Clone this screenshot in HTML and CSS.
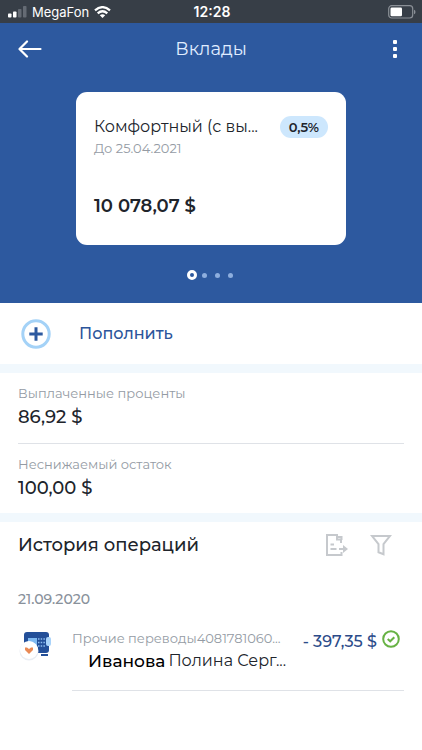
FILE: index.html
```
<!DOCTYPE html>
<html lang="ru">
<head>
<meta charset="utf-8">
<meta name="viewport" content="width=device-width, initial-scale=1">
<title>Вклады</title>
<link rel="stylesheet" href="styles.css">
</head>
<body>
<div class="status">
  <div class="carrier">
    <svg width="19" height="12" viewBox="0 0 19 12" aria-hidden="true"><g fill="#fff"><rect x="0" y="7.500" width="3.500" height="4" rx=".8"/><rect x="5" y="5.500" width="3.500" height="6" rx=".8"/></g><g fill="#656b74"><rect x="10" y="3" width="3.500" height="8.500" rx=".8"/><rect x="15" y="0" width="3.500" height="11.500" rx=".8"/></g></svg>
    <span>MegaFon</span>
    <svg width="17" height="12" viewBox="0 0 17 12" fill="none" stroke="#fff" stroke-width="2.300" aria-hidden="true"><path d="M1 4.300Q8.500-2 16 4.300M3.700 7.300Q8.500 3.200 13.300 7.300"/><path d="M8.500 12L5.800 9.300Q8.500 7.200 11.200 9.300Z" fill="#fff" stroke="none"/></svg>
  </div>
  <time>12:28</time>
  <svg class="battery" width="28" height="14" viewBox="0 0 28 14" aria-hidden="true"><rect x=".7" y=".7" width="24" height="12.300" rx="3" fill="none" stroke="#8b9097" stroke-width="1.200"/><rect x="2.500" y="2.500" width="11.500" height="8.700" rx="1.300" fill="#fff"/><path d="M26 4.800q1.500.5 1.500 2.200T26 9.200z" fill="#8b9097"/></svg>
</div>
<header class="hero">
  <div class="bar">
    <button class="icon-btn" aria-label="Назад"><svg width="24" height="18" viewBox="0 0 24 18" fill="none" stroke="#fff" stroke-width="2.200" stroke-linecap="round" stroke-linejoin="round"><path d="M9 1.500L1.500 9L9 16.500M2 9H22.500"/></svg></button>
    <h1>Вклады</h1>
    <button class="icon-btn" aria-label="Меню"><svg width="12" height="20" viewBox="0 0 12 20" fill="#fff"><rect x="1" y="1" width="4" height="4" rx="1"/><rect x="1" y="8" width="4" height="4" rx="1"/><rect x="1" y="15" width="4" height="4" rx="1"/></svg></button>
  </div>
  <article class="deposit">
    <div class="deposit-top"><h2>Комфортный (с вы...</h2><span class="rate">0,5%</span></div>
    <p class="until">До 25.04.2021</p>
    <p class="balance">10 078,07 $</p>
  </article>
  <div class="dots"><i class="dot current"></i><i class="dot"></i><i class="dot"></i><i class="dot"></i></div>
</header>
<main>
  <button class="topup">
    <svg width="30" height="30" viewBox="0 0 30 30" fill="none" aria-hidden="true"><circle cx="15" cy="15" r="13.200" stroke="#a4d2f7" stroke-width="3"/><path d="M15 8.300V21.700M8.300 15H21.700" stroke="#2c599f" stroke-width="3"/></svg>
    <span>Пополнить</span>
  </button>
  <dl class="facts">
    <div class="fact"><dt>Выплаченные проценты</dt><dd>86,92 $</dd></div>
    <div class="fact"><dt>Неснижаемый остаток</dt><dd>100,00 $</dd></div>
  </dl>
  <section class="history">
    <div class="history-head">
      <h2>История операций</h2>
      <button class="icon-btn" aria-label="Выписка"><svg width="24" height="24" viewBox="0 0 24 24" fill="none" stroke="#c6c9cd" stroke-width="2"><path d="M17 10V6.500H13V2H3V22H17.500V19M13 2V4H17.500V7M6.500 11.500H10M6.500 16H12.500M15 16H20"/><path d="M19 12L24 16L19 20Z" fill="#c6c9cd" stroke="none"/></svg></button>
      <button class="icon-btn" aria-label="Фильтр"><svg width="22" height="22" viewBox="0 0 22 22" fill="none" stroke="#c6c9cd" stroke-width="2"><path d="M2 2H20L13.500 10V20.300L8.500 18.300V10Z"/></svg></button>
    </div>
    <h3>21.09.2020</h3>
    <div class="operation">
      <svg class="safe" width="34" height="34" viewBox="0 0 34 34" aria-hidden="true"><rect x="6" y="4" width="25" height="21" rx="3" fill="#234f99"/><path d="M23 26h7v2h-7z" fill="#234f99"/><rect x="10" y="10" width="9" height="9" fill="#80baf1"/><rect x="28" y="9" width="5" height="9" rx="2" fill="#a9d3fa"/><path d="M20 11h7M20 14.500h7M20 18h7" stroke="#8dbdf0" stroke-width="1.500" stroke-dasharray="1.500 1.200"/><circle cx="11" cy="23" r="9.500" fill="#e9edf3"/><circle cx="11" cy="22" r="9" fill="#fff"/><path d="M11 26L7 22V19.500H9L11 21L13 19.500H15V22Z" fill="#e98a55"/></svg>
      <div class="operation-body">
        <div class="operation-text"><p class="kind">Прочие переводы4081781060...</p><p class="person"><b>Иванова</b><span>Полина Серг...</span></p></div>
        <span class="amount">- 397,35 $</span>
        <svg class="check" width="18" height="18" viewBox="0 0 18 18" fill="none" stroke="#67b244" stroke-width="2" role="img" aria-label="Выполнено"><circle cx="9" cy="9" r="7.800"/><path d="M5.700 9L8.200 11.300L12.300 7.200"/></svg>
      </div>
    </div>
  </section>
</main>
</body>
</html>
```
FILE: styles.css
```
* { box-sizing: border-box; }
body { margin: 0; background: #fff; color: #20242b; font-family: Montserrat, Inter, "Noto Sans", sans-serif; font-size: 16px; font-weight: 500; }
h1, h2, h3, p, dl, dd { margin: 0; font-weight: 500; }
button { border: 0; padding: 0; background: none; font: inherit; color: inherit; text-align: left; }
svg { display: block; flex: none; }
.icon-btn { display: flex; }

.status { display: grid; grid-template-columns: 1fr auto 1fr; align-items: center; height: 23px; padding: 0 6px 0 8px; background: #373e47; color: #fff; font: 13px/16px Inter, sans-serif; }
.carrier { display: flex; align-items: center; gap: 5px; }
.status time { font-size: 14px; font-weight: 600; }
.battery { justify-self: end; }

.hero { height: 280px; background: #2d599f; }
.bar { display: grid; grid-template-columns: 1fr auto 1fr; align-items: center; height: 51px; padding: 0 18px; }
.bar h1 { color: #e0edff; font-size: 18px; line-height: 24px; font-weight: 400; }
.bar .icon-btn:last-child { justify-self: end; }
.deposit { width: 64%; height: 153px; margin: 18px auto 0; padding: 23px 18px; border-radius: 11px; background: #fff; }
.deposit-top { display: flex; align-items: center; justify-content: space-between; height: 23px; white-space: nowrap; }
.deposit h2 { font-size: 16px; line-height: 24px; font-weight: 400; }
.rate { padding: 0 9px; border-radius: 11px; background: #cde7fd; font-size: 13px; line-height: 22px; font-weight: 600; }
.until { color: #949ba4; font-size: 13px; line-height: 20px; font-weight: 400; }
.balance { margin-top: 35px; font-size: 18px; line-height: 26px; font-weight: 600; }
.dots { display: grid; grid-template-columns: repeat(4, 13px); place-items: center; justify-content: center; height: 10px; margin-top: 25px; }
.dot { width: 5px; height: 5px; border-radius: 50%; background: #8daede; }
.current { width: 10px; height: 10px; border: 3px solid #fff; background: #2d599f; }

.topup { display: flex; align-items: center; gap: 28px; width: 100%; height: 61px; padding: 0 21px; color: #2c559b; font-size: 16px; }
.facts { padding: 0 18px; border: solid #f1f8fd; border-width: 9px 0; }
.fact { height: 70px; padding-top: 10px; }
.fact + .fact { border-top: 1px solid #dfe2e7; }
.fact dt { color: #949ba4; font-size: 13px; line-height: 20px; font-weight: 400; }
.fact dd { font-size: 18px; line-height: 28px; }

.history { padding: 10px 18px; }
.history-head { display: flex; align-items: center; gap: 22px; padding-right: 12px; }
.history-head h2 { flex: 1; font-size: 18px; line-height: 26px; }
.history h3 { margin-top: 31px; color: #89919b; font-size: 14px; line-height: 20px; font-weight: 500; }
.operation { display: flex; gap: 20px; margin-top: 19px; }
.operation-body { display: flex; flex: 1; height: 63px; min-width: 0; border-bottom: 1px solid #dfe2e7; white-space: nowrap; }
.operation-text { flex: 1; min-width: 0; }
.kind { color: #949ba4; font-size: 13px; line-height: 20px; font-weight: 400; }
.person { display: flex; gap: 3px; padding-left: 16px; font-size: 16px; line-height: 26px; }
.person span { font-weight: 400; }
.person b { color: #000; font-size: 17px; font-weight: 500; }
.amount { padding-top: 4px; color: #2c4b89; font-size: 16px; line-height: 20px; }
.check { margin: 2px 4px 0 5px; }
```
